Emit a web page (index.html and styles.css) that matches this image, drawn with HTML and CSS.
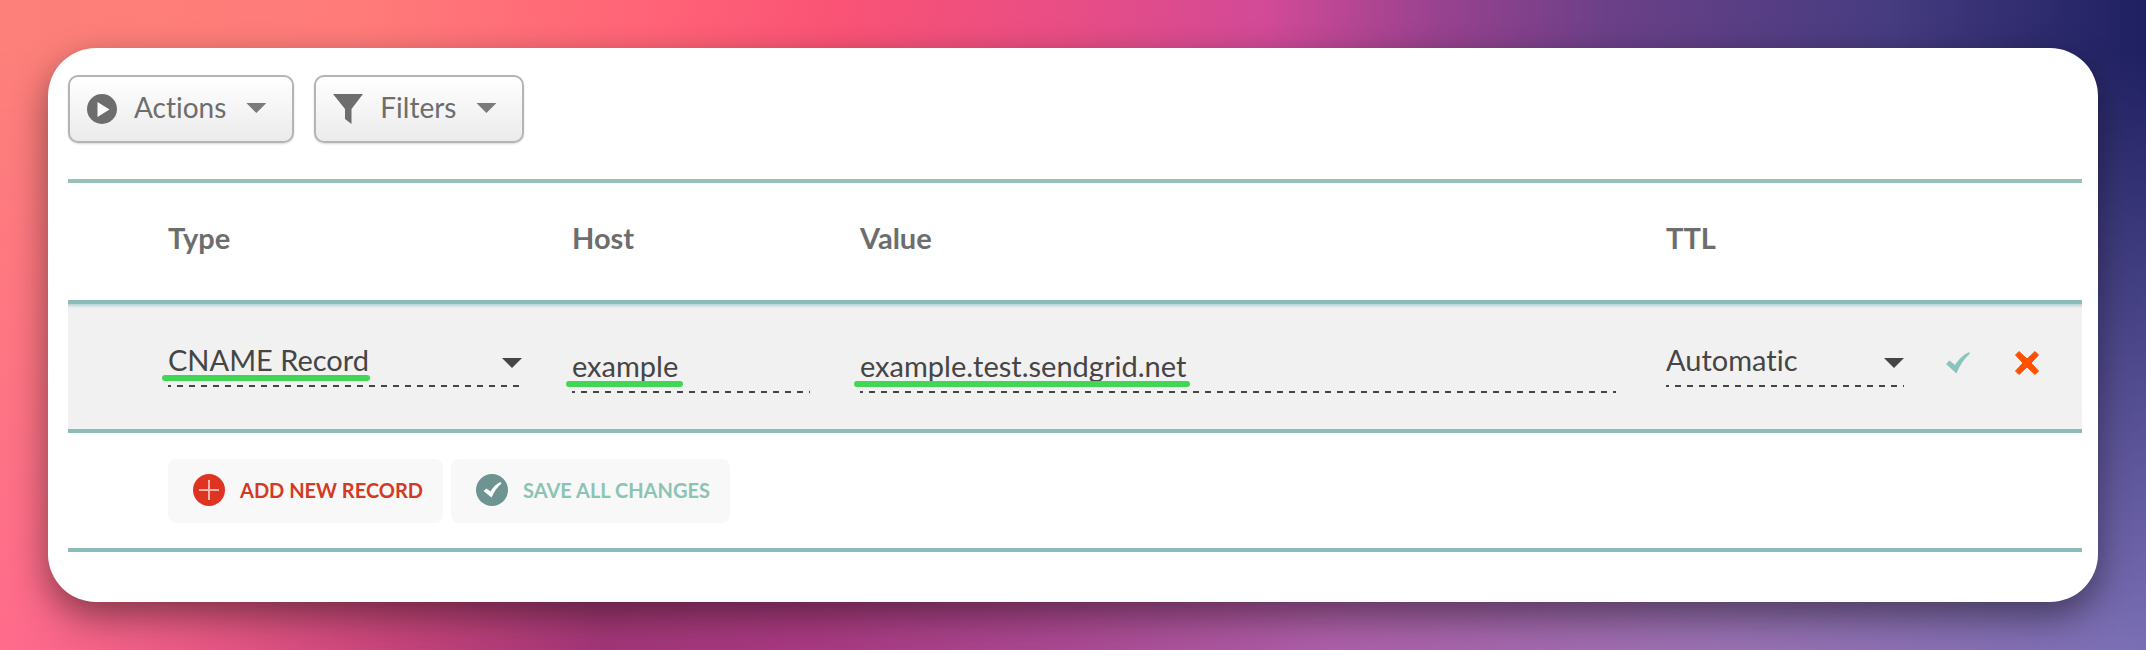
FILE: index.html
```
<!DOCTYPE html>
<html lang="en">
<head>
    <meta charset="UTF-8">
    <title>Host Records</title>
    <link rel="stylesheet" href="styles.css">
</head>
<body>
    <main class="card">
        <div class="toolbar">
            <button type="button" class="tool-btn">
                <svg width="30" height="30" viewBox="0 0 30 30"><circle cx="15" cy="15" r="15" fill="#6d6d6d"/><path d="M10.500 8v15l12-7.500z" fill="#fff"/></svg>
                <span>Actions</span>
                <i class="caret"></i>
            </button>
            <button type="button" class="tool-btn">
                <svg width="30" height="30" viewBox="0 0 30 30"><path d="M0 0h30L18.500 15v15L12 25V15z" fill="#6d6d6d"/></svg>
                <span>Filters</span>
                <i class="caret"></i>
            </button>
        </div>

        <table class="records">
            <colgroup>
                <col class="col-check">
                <col class="col-type">
                <col class="col-host">
                <col>
                <col class="col-ttl">
                <col class="col-actions">
            </colgroup>
            <thead>
                <tr>
                    <td></td>
                    <th scope="col">Type</th>
                    <th scope="col">Host</th>
                    <th scope="col">Value</th>
                    <th scope="col">TTL</th>
                    <td></td>
                </tr>
            </thead>
            <tbody>
                <tr class="record">
                    <td></td>
                    <td>
                        <div class="field select-field">
                            <select aria-label="Type">
                                <option>CNAME Record</option>
                                <option>A Record</option>
                                <option>TXT Record</option>
                            </select>
                            <i class="caret"></i>
                            <span class="mark mark-type"></span>
                        </div>
                    </td>
                    <td>
                        <div class="field text-field">
                            <input type="text" aria-label="Host" value="example">
                            <span class="mark mark-host"></span>
                        </div>
                    </td>
                    <td>
                        <div class="field text-field">
                            <input type="text" aria-label="Value" value="example.test.sendgrid.net">
                            <span class="mark mark-value"></span>
                        </div>
                    </td>
                    <td class="ttl">
                        <div class="field select-field">
                            <select aria-label="TTL">
                                <option>Automatic</option>
                                <option>1 min</option>
                                <option>30 min</option>
                            </select>
                            <i class="caret"></i>
                        </div>
                    </td>
                    <td class="row-actions">
                        <div>
                            <button type="button" aria-label="Save record">
                                <svg width="24" height="24" viewBox="0 0 24 24"><path d="M0 13l3.500-3.500L9 14C13 8 18 3 23.500 1v2C18 8 14 14 10.500 22.500z" fill="#8bc4ba"/></svg>
                            </button>
                            <button type="button" aria-label="Remove record">
                                <svg width="24" height="24" viewBox="0 0 24 24"><path d="M4 0.500L12 8l8-7.500L23.500 4 16 12l7.500 8-3.500 3.500L12 16l-8 7.500L0.500 20 8 12 0.500 4z" fill="#ff5000" stroke="#ff5000" stroke-linejoin="round"/></svg>
                            </button>
                        </div>
                    </td>
                </tr>
            </tbody>
            <tfoot>
                <tr>
                    <td></td>
                    <td colspan="5">
                        <div class="footer-buttons">
                            <button type="button" class="link-btn add">
                                <svg width="32" height="32" viewBox="0 0 32 32"><circle cx="16" cy="16" r="16" fill="#df3421"/><path d="M6 16h20M16 6v20" stroke="#f6b5ad" stroke-width="2"/></svg>
                                <span>ADD NEW RECORD</span>
                            </button>
                            <button type="button" class="link-btn save">
                                <svg width="32" height="32" viewBox="0 0 32 32"><circle cx="16" cy="16" r="16" fill="#6d9490"/><path d="M7.500 17l3-2.500 4 3C17 13 20 10 24.500 8l1 1.500C21 13 18 18 15.500 23.500z" fill="#fff"/></svg>
                                <span>SAVE ALL CHANGES</span>
                            </button>
                        </div>
                    </td>
                </tr>
            </tfoot>
        </table>
    </main>
</body>
</html>
```
FILE: styles.css
```
* {
    box-sizing: border-box;
}

body {
    margin: 0;
    padding: 48px;
    min-height: 100vh;
    position: relative;
    font-family: Lato, sans-serif;
    font-size: 29px;
    font-variant-ligatures: none;
    color: #454545;
    background: linear-gradient(90deg, #ff6c8c 0%, #ea5a86 9%, #c9457c 18%, #a23678 28%, #a83a82 38%, #ab4a93 50%, #ad60a8 62%, #9a72b2 80%, #7a6fb5 100%);
}

/* upper colours, fading into the lower ones */
body::before {
    content: "";
    position: absolute;
    inset: 0;
    background: linear-gradient(90deg, #fd807a 0%, #ff7b79 17%, #ff6277 31%, #fa5375 39%, #e84d85 50%, #d24a97 59%, #99428f 67%, #6b4088 75%, #463c80 88%, #1e2062 100%);
    -webkit-mask-image: linear-gradient(#000 8%, transparent);
    mask-image: linear-gradient(#000 8%, transparent);
}

.card {
    position: relative;
    padding: 27px 16px 50px 20px;
    background: #fff;
    border-radius: 48px;
    box-shadow: 0 14px 36px rgba(0, 0, 0, 0.45);
}

button {
    font-family: inherit;
    font-variant-ligatures: none;
    cursor: pointer;
}

svg {
    display: block;
    flex: none;
}

.caret {
    width: 20px;
    height: 10px;
    background: #454545;
    clip-path: polygon(0 0, 100% 0, 50% 100%);
}

/* toolbar */
.toolbar {
    display: flex;
    gap: 20px;
    margin-bottom: 36px;
}

.tool-btn {
    display: flex;
    align-items: center;
    height: 68px;
    padding: 0 26px 0 17px;
    border: 2px solid #b4b4b4;
    border-radius: 10px;
    background: linear-gradient(#fff, #ebebeb);
    box-shadow: 0 1px 2px rgba(0, 0, 0, 0.15);
    font-size: 28px;
    line-height: 32px;
    color: #6d6d6d;
}

.tool-btn span {
    margin: 0 20px 4px 17px;
}

.tool-btn .caret {
    margin-bottom: 2px;
    background: #7b7b7b;
}

/* records table */
.records {
    width: 100%;
    table-layout: fixed;
    border-spacing: 0;
    border-top: 4px solid #96c0ba;
}

.col-check {
    width: 100px;
}

.col-type {
    width: 404px;
}

.col-host {
    width: 288px;
}

.col-ttl {
    width: 280px;
}

.col-actions {
    width: 136px;
}

.records th,
.records td {
    padding: 0 50px 0 0;
    border-bottom: 4px solid #8dbcb8;
    text-align: left;
}

.records th {
    height: 121px;
    padding-bottom: 8px;
    font-weight: 700;
    color: #6d6d6d;
}

.records .record td {
    height: 129px;
    background: linear-gradient(#b5d3d3, #f1f1f1 4px);
}

.records .ttl {
    padding-right: 42px;
}

.field {
    position: relative;
    padding-bottom: 3px;
    background: repeating-linear-gradient(90deg, #454545 0 3px, transparent 3px 9px, #454545 9px 12px) left bottom / 100% 2px no-repeat;
}

.field select,
.field input {
    display: block;
    width: 100%;
    height: 50px;
    padding: 0;
    border: 0;
    outline: 0;
    background: transparent;
    font: inherit;
    color: inherit;
    appearance: none;
}

.select-field {
    margin-bottom: 12px;
}

.select-field .caret {
    position: absolute;
    right: 0;
    top: 24px;
    pointer-events: none;
}

.mark {
    position: absolute;
    left: -6px;
    bottom: 6px;
    height: 6px;
    border-radius: 3px;
    background: #41d654;
}

.mark-type {
    width: 208px;
}

.mark-host {
    width: 117px;
}

.mark-value {
    width: 336px;
}

.records .row-actions {
    padding: 0;
}

.row-actions div {
    display: flex;
    gap: 45px;
    margin-bottom: 8px;
}

.row-actions button {
    padding: 0;
    border: 0;
    background: none;
}

/* footer */
.records tfoot td {
    height: 119px;
}

.footer-buttons {
    display: flex;
    gap: 8px;
}

.link-btn {
    display: flex;
    align-items: center;
    gap: 15px;
    height: 64px;
    padding: 0 20px 2px 25px;
    border: 0;
    border-radius: 8px;
    background: #f8f8f8;
    font-size: 20px;
    font-weight: 700;
}

.add {
    color: #d33a25;
}

.save {
    color: #8bc4b5;
}
```
